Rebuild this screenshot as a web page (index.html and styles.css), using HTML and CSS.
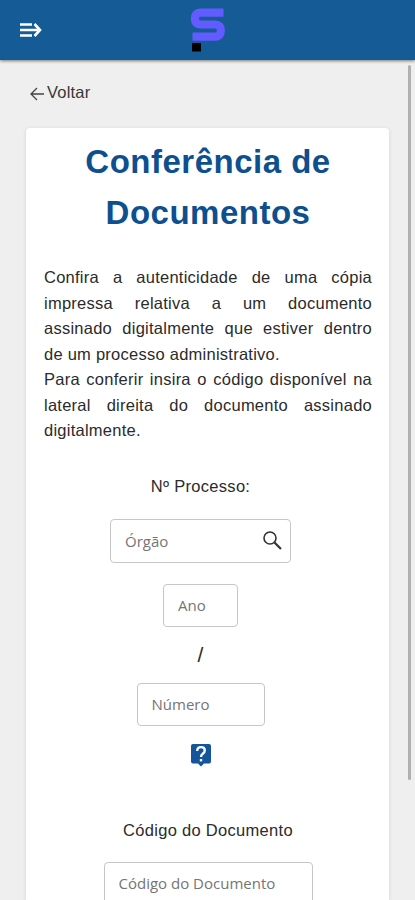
FILE: index.html
```html
<!DOCTYPE html>
<html lang="pt-BR">
<head>
<meta charset="utf-8">
<meta name="viewport" content="width=device-width, initial-scale=1">
<title>Conferência de Documentos</title>
<link rel="stylesheet" href="styles.css">
</head>
<body>
<header class="topbar">
  <button class="menu" aria-label="Menu">
    <svg width="22" height="16" viewBox="0 0 22 16" fill="none" stroke="#fff" stroke-width="2.6"><path d="M0 2.500H12M0 8H18M0 13.500H12M14.500 2L20 8L14.500 14"/></svg>
  </button>
  <svg class="logo" width="36" height="44" viewBox="0 0 36 44"><path d="M33.500 4.700H11Q5 4.700 5 10V11Q5 16.500 11 16.500H25Q30.800 16.500 30.800 22V23Q30.800 28.600 25 28.600H2.500" fill="none" stroke="#625bff" stroke-width="8.200"/><path d="M2 35h9v8.500h-9z"/></svg>
</header>
<main class="content">
  <a class="back"><svg width="14" height="14" viewBox="0 0 14 14" fill="none" stroke="#444" stroke-width="1.3"><path d="M14 7H1M7 1L1 7L7 13"/></svg>Voltar</a>
  <section class="card">
    <h1>Conferência de Documentos</h1>
    <p class="intro">Confira a autenticidade de uma cópia impressa relativa a um documento assinado digitalmente que estiver dentro de&nbsp;um processo administrativo.<br>Para conferir insira o código disponível na lateral direita do documento assinado digitalmente.</p>
    <form class="form">
      <div class="process">
        <label class="label">Nº Processo:</label>
        <div class="field organ"><span>Órgão</span><svg width="19" height="19" viewBox="0 0 19 19" fill="none" stroke="#333"><circle cx="7" cy="7" r="6" stroke-width="1.6"/><path d="M11.500 11.500L18 18" stroke-width="2.200"/></svg></div>
        <div class="field year"><span>Ano</span></div>
        <div class="slash">/</div>
        <div class="field number"><span>Número</span></div>
        <svg class="help" width="20" height="23" viewBox="0 0 20 23"><path d="M2 0H18Q20 0 20 2V17.500Q20 19.500 18 19.500H13L10 22.500L7 19.500H2Q0 19.500 0 17.500V2Q0 0 2 0Z" fill="#15559a"/><path d="M6.200 7Q6.200 3.200 10 3.200Q13.800 3.200 13.800 6.500Q13.800 8.200 12 9.500Q10 10.900 10 13" fill="none" stroke="#fff" stroke-width="2.300"/><path d="M8.800 15h2.400v2.400H8.800z" fill="#fff"/></svg>
      </div>
      <label class="label code-label">Código do Documento</label>
      <div class="field code"><span>Código do Documento</span></div>
    </form>
  </section>
</main>
<div class="scrollbar"></div>
</body>
</html>
```
FILE: styles.css
```css
* { box-sizing: border-box; }
html { overflow: hidden; }
body {
  display: flex;
  flex-direction: column;
  margin: 0;
  height: 900px;
  overflow: hidden;
  background: #efefef;
  color: #2b2b2b;
  font: 16px/25.6px "Liberation Sans", Arial, sans-serif;
}
.topbar {
  display: grid;
  flex: none;
  grid-template-columns: 1fr auto 1fr;
  align-items: center;
  height: 60px;
  padding: 0 20px;
  background: #155c96;
  box-shadow: 0 1px 3px rgba(0, 0, 0, .5);
}
.menu { display: flex; padding: 0; border: 0; background: none; }
.content {
  display: flex;
  flex: 1;
  flex-direction: column;
  min-height: 0;
  padding: 20px 26px 0;
}
.back { display: flex; flex: none; align-items: center; gap: 3px; height: 26px; padding-left: 4px; color: #383838; font-size: 16.5px; letter-spacing: .2px; }
.back svg { margin-top: 2px; }
.card {
  flex: 1;
  min-height: 0;
  overflow: hidden;
  width: 363px;
  margin-top: 22px;
  padding: 8px 17px 0 18px;
  border-radius: 4px 4px 0 0;
  background: #fff;
  box-shadow: 0 1px 4px rgba(0, 0, 0, .12);
}
h1 {
  margin: 0;
  color: #0e4f8f;
  font-size: 33px;
  line-height: 51.2px;
  letter-spacing: .5px;
  text-align: center;
}
.intro { margin: 26.5px 0 0; font-size: 16.5px; text-align: justify; letter-spacing: .25px; }
.form, .process {
  display: flex;
  flex-direction: column;
  align-items: center;
}
.form { margin-top: 29.5px; }
.process { margin-right: 15px; }
.label { font-size: 16.5px; letter-spacing: .3px; }
.field {
  display: flex;
  align-items: center;
  justify-content: space-between;
  height: 43px;
  padding: 0 8px 1px 14px;
  border: 1px solid #c6c6c6;
  border-radius: 4px;
  color: #757575;
  font: 15px "Open Sans", sans-serif;
}
.organ { width: 181px; height: 44px; margin-top: 20px; }
.year { width: 75px; margin-top: 20.5px; }
.slash { margin-top: 15px; font-size: 21px; }
.number { width: 128px; margin-top: 15.5px; }
.help { margin-top: 18px; }
.code-label { margin-top: 51.5px; }
.code { width: 209px; margin-top: 18px; }
.scrollbar {
  position: absolute;
  top: 65px;
  right: 4px;
  width: 3px;
  height: 715px;
  border-radius: 2px;
  background: #b0b0b0;
}
```
